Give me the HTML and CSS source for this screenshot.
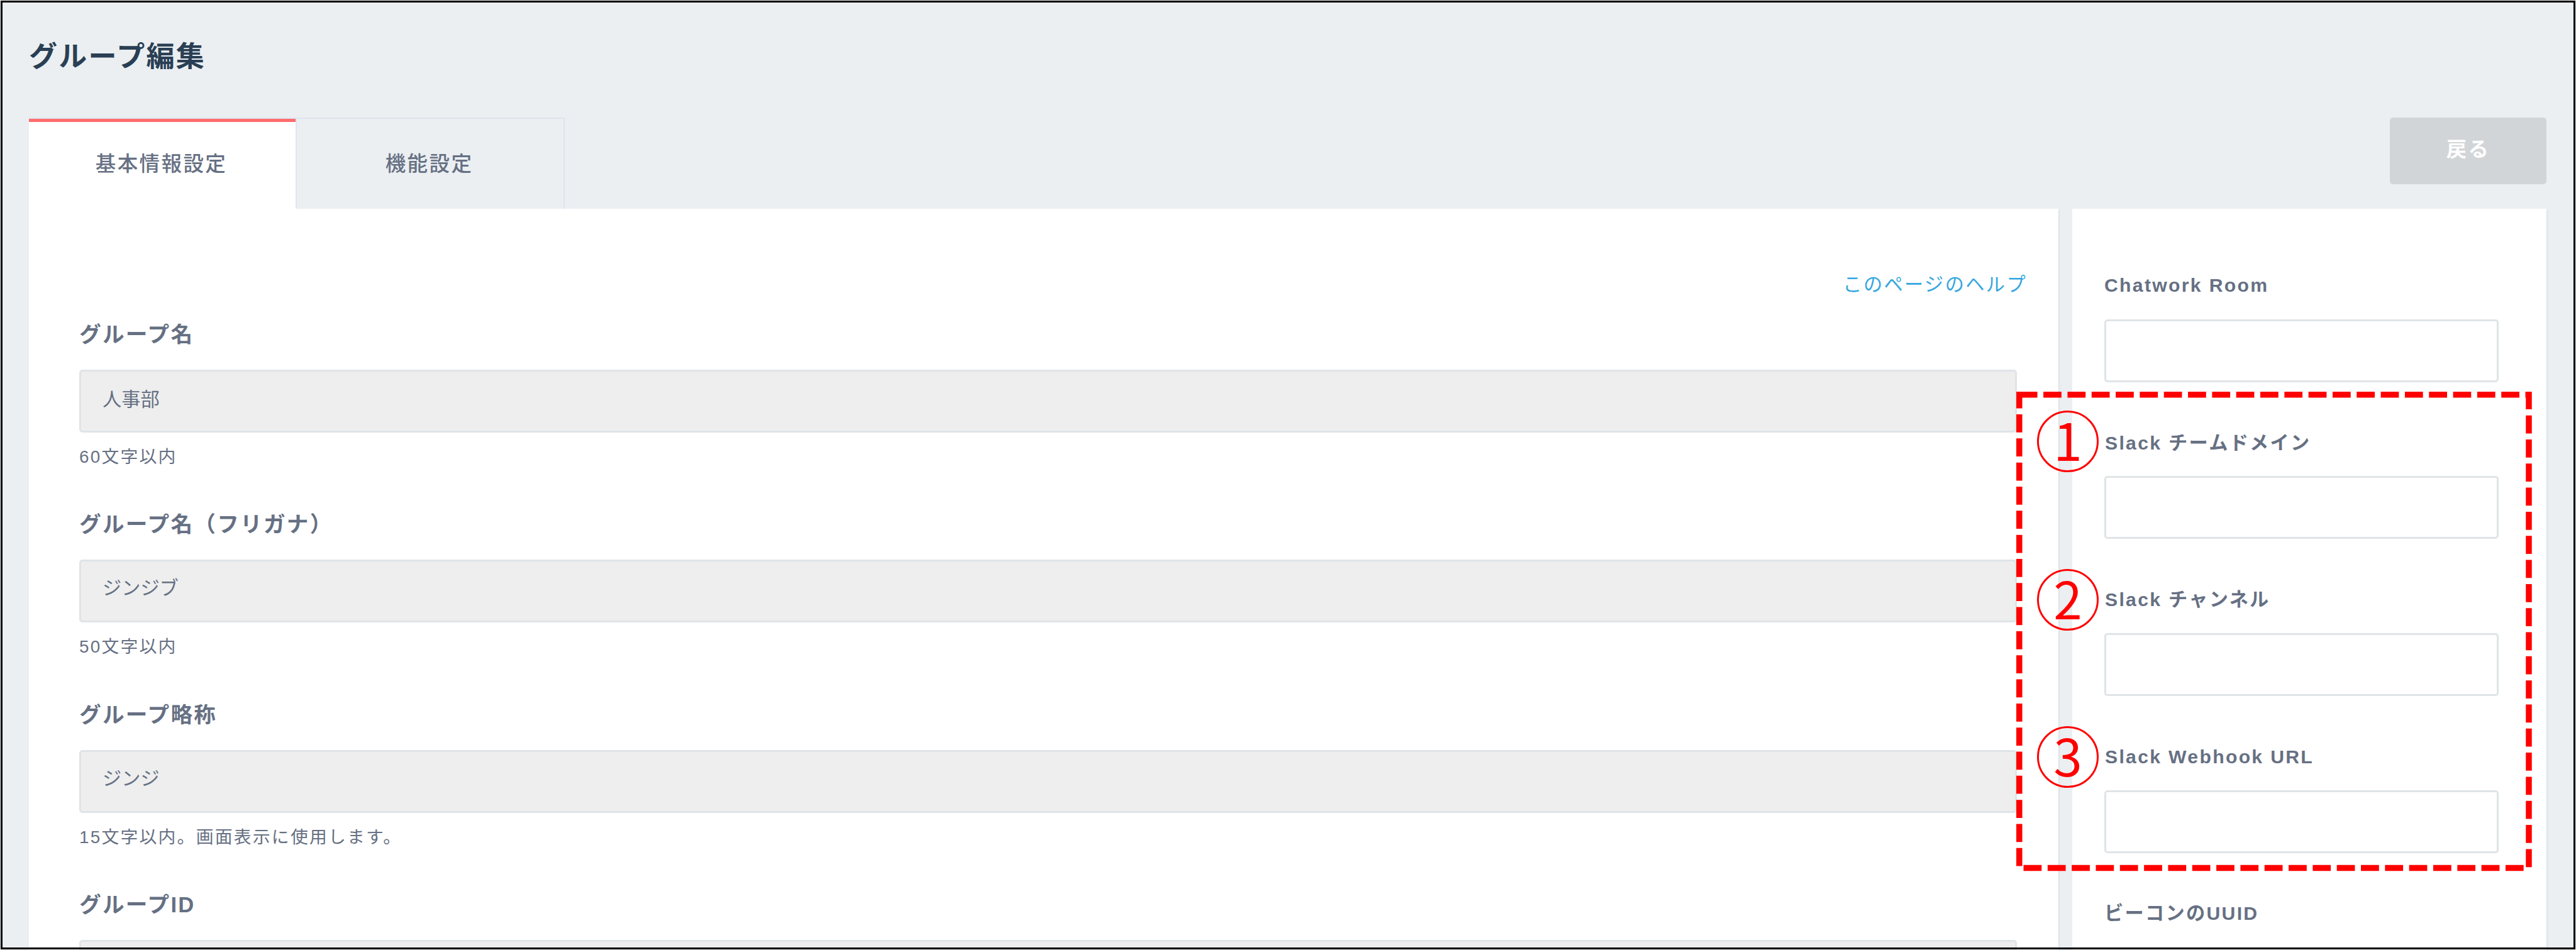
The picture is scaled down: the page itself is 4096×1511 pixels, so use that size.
FILE: index.html
```html
<!DOCTYPE html>
<html lang="ja">
<head>
<meta charset="utf-8">
<title>グループ編集</title>
<link rel="stylesheet" href="styles.css">
</head>
<body>
<div class="page">
  <h1 class="title">グループ編集</h1>
  <div class="toolbar">
    <nav class="tabs">
      <a class="tab tab-active">基本情報設定</a>
      <a class="tab">機能設定</a>
    </nav>
    <button class="back">戻る</button>
  </div>
  <div class="columns">
    <main class="card main">
      <a class="help">このページのヘルプ</a>
      <div class="group">
        <label class="label">グループ名</label>
        <div class="input disabled">人事部</div>
        <p class="hint">60文字以内</p>
      </div>
      <div class="group">
        <label class="label">グループ名（フリガナ）</label>
        <div class="input disabled kana">ジンジブ</div>
        <p class="hint">50文字以内</p>
      </div>
      <div class="group">
        <label class="label">グループ略称</label>
        <div class="input disabled kana">ジンジ</div>
        <p class="hint">15文字以内。画面表示に使用します。</p>
      </div>
      <div class="group">
        <label class="label">グループID</label>
        <div class="input disabled"></div>
      </div>
    </main>
    <aside class="card side">
      <div class="field"><label class="side-label">Chatwork Room</label><div class="input"></div></div>
      <div class="field"><label class="side-label slack">Slack チームドメイン</label><div class="input"></div></div>
      <div class="field"><label class="side-label slack">Slack チャンネル</label><div class="input"></div></div>
      <div class="field"><label class="side-label slack">Slack Webhook URL</label><div class="input"></div></div>
      <div class="field"><label class="side-label">ビーコンのUUID</label></div>
    </aside>
  </div>
  <svg class="marker" width="820" height="763" viewBox="0 0 820 763">
    <path d="M4.8 4.8H815V757.4H4.8Z" fill="none" stroke="#f00" stroke-width="9.5" stroke-dasharray="28.75 9.57"/>
  </svg>
  <span class="num num-1">1</span>
  <span class="num num-2">2</span>
  <span class="num num-3">3</span>
  <div class="frame"></div>
</div>
</body>
</html>
```
FILE: styles.css
```css
* { box-sizing: border-box; }
body {
  margin: 0;
  font-family: "Liberation Sans", "Noto Sans CJK JP", sans-serif;
  color: #667083;
}
.page {
  position: relative;
  width: 4096px;
  height: 1511px;
  overflow: hidden;
  background: #ebeff2;
  padding: 0 47px 0 46px;
}
.title {
  margin: 0;
  height: 187px;
  padding-top: 58px;
  font-size: 45px;
  line-height: 66px;
  letter-spacing: 2.3px;
  color: #2a3f54;
}
.toolbar {
  display: flex;
  justify-content: space-between;
  align-items: flex-start;
  height: 145px;
}
.tabs { display: flex; height: 145px; }
.tab {
  width: 428px;
  border: 2px solid #dfe4ee;
  border-bottom: 0;
  padding: 50px 3px 0 0;
  text-align: center;
  font-size: 32.5px;
  font-weight: 500;
  line-height: 44px;
  letter-spacing: 2.4px;
}
.tab-active {
  width: 424px;
  background: #fff;
  border: 0;
  border-top: 2px solid #dfe4ee;
  box-shadow: inset 0 5px #ff6c6c;
}
.back {
  width: 249px;
  height: 106px;
  border: 0;
  border-radius: 5px;
  background: #d2d5d8;
  color: #fff;
  font: bold 32.4px/44px "Liberation Sans", "Noto Sans CJK JP", sans-serif;
  letter-spacing: 2.3px;
  padding: 0 0 4px;
}
.columns { display: flex; gap: 22px; height: 1179px; }
.card { background: #fff; box-shadow: 2px 2px 2px #dde2e5; }
.main { width: 3227px; padding: 99px 50px 0 80px; }
.side { flex: 1; padding: 100px 76px 0 51px; }
.help {
  display: block;
  height: 73px;
  text-align: right;
  font-size: 30.2px;
  line-height: 44px;
  letter-spacing: 2.4px;
  color: #35a7e0;
}
.group { height: 302.3px; width: 3081px; }
.label {
  display: block;
  height: 84px;
  padding-top: 4px;
  font-size: 34.6px;
  font-weight: bold;
  line-height: 48px;
  letter-spacing: 2.3px;
}
.input {
  height: 100px;
  border: 3px solid #dfe4e7;
  border-radius: 5px;
  background: #fff;
  padding: 23px 34px;
  font-size: 30.2px;
  line-height: 44px;
}
.disabled { background: #eee; }
.kana { padding-top: 21px; }
.hint {
  margin: 17px 0 0;
  font-size: 27.8px;
  line-height: 44px;
  letter-spacing: 2.25px;
}
.field { height: 249.7px; }
.side-label {
  display: block;
  height: 75.5px;
  font-size: 30.2px;
  font-weight: bold;
  line-height: 44px;
  letter-spacing: 2.3px;
}
.slack { padding: 1px 0 0 1px; }
.marker { position: absolute; left: 3206px; top: 623px; }
.num {
  position: absolute;
  left: 3239px;
  width: 98px;
  height: 98px;
  border: 3px solid #f00;
  border-radius: 50%;
  text-align: center;
  font-family: "Noto Sans CJK JP", sans-serif;
  font-size: 82px;
  line-height: 84px;
  color: #f00;
}
.num-1 { top: 653px; }
.num-2 { top: 905px; }
.num-3 { top: 1155px; }
.frame { position: absolute; inset: 1px; border: 3px solid #000; }
```
